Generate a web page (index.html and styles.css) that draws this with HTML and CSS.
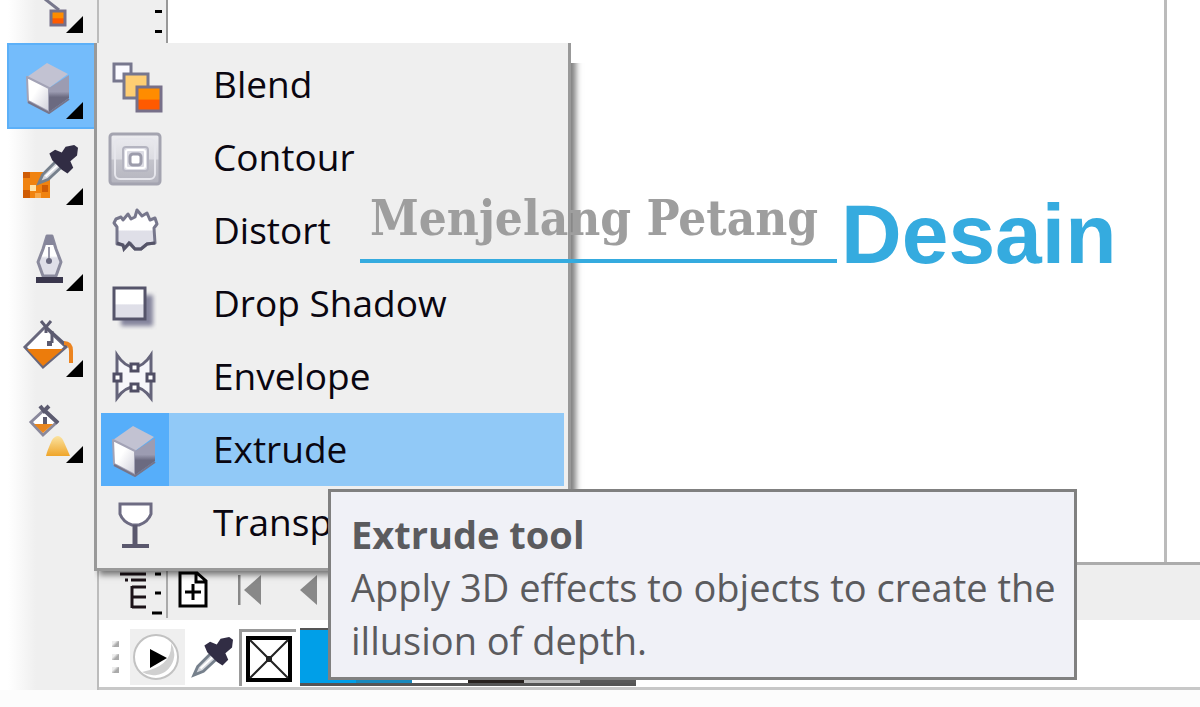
FILE: index.html
```html
<!DOCTYPE html>
<html lang="id">
  <head>
    <meta charset="UTF-8" />
    <meta name="viewport" content="width=device-width, initial-scale=1.0" />
    <title>Extrude tool</title>
    <link rel="stylesheet" href="styles.css">
  </head>

  <body>
    <svg class="defs" aria-hidden="true">
      <defs>
        <linearGradient id="front" x1="0" y1="0" x2="1" y2="1">
          <stop offset="0.4" stop-color="#fff" />
          <stop offset="1" stop-color="#cfcfda" />
        </linearGradient>
        <linearGradient id="side" x1="0" y1="0" x2="0" y2="1">
          <stop offset="0.45" stop-color="#9c9cb2" />
          <stop offset="0.6" stop-color="#6b6a80" />
        </linearGradient>
        <linearGradient id="glass" x1="0" y1="0" x2="0" y2="1">
          <stop offset="0.5" stop-color="#fff" />
          <stop offset="0.55" stop-color="#dfdfe8" />
        </linearGradient>
        <linearGradient id="hot" x1="0" y1="0" x2="0" y2="1">
          <stop offset="0.5" stop-color="#ff8c00" />
          <stop offset="0.55" stop-color="#ff5a00" />
        </linearGradient>
        <linearGradient id="plate" x1="0" y1="0" x2="0" y2="1">
          <stop offset="0" stop-color="#ececf0" />
          <stop offset="0.5" stop-color="#dcdce2" />
          <stop offset="0.52" stop-color="#c4c4cc" />
          <stop offset="1" stop-color="#b4b4be" />
        </linearGradient>
        <linearGradient id="lamp" x1="0" y1="0" x2="0" y2="1">
          <stop offset="0" stop-color="#fbe3a0" />
          <stop offset="1" stop-color="#efa52a" />
        </linearGradient>
        <filter id="soft"><feGaussianBlur stdDeviation="2" /></filter>
      </defs>
      <symbol id="cube" viewBox="0 0 46 52">
        <path d="M22 1 L43 12 L24 26 L2 15 Z" fill="#c2c2d2" />
        <path d="M2 15 L24 26 L24 50 L3 39 Z" fill="url(#front)" stroke="#a3a3b6" stroke-width="2" stroke-linejoin="round" />
        <path d="M24 26 L44 13 L44 36 L24 50 Z" fill="url(#side)" />
        <path d="M3 40 L24 51 L44 37" fill="none" stroke="#77758a" stroke-width="2" />
      </symbol>
      <symbol id="dropper" viewBox="0 0 44 44">
        <path d="M3 41 L7 32 L23 16 L29 22 L13 37 Z" fill="#d5d8de" stroke="#76808c" stroke-width="3" />
        <path d="M10 34 L25 20" stroke="#fff" stroke-width="2" />
        <path d="M14 10 L20 6 L27 9 L31 3 L40 1 L44 4 L43 12 L36 18 L39 25 L33 31 L27 27 L17 17 Z" fill="#312d44" />
      </symbol>
      <symbol id="flyout" viewBox="0 0 18 18">
        <path d="M0 17 L17 0 V17 Z" />
      </symbol>
    </svg>

    <div class="app">
      <nav class="toolbox" aria-label="Toolbox">
        <button class="tool tool-cut" aria-label="Connector">
          <svg viewBox="0 0 86 86">
            <path d="M38 42 L52 53" stroke="#77778c" stroke-width="3" />
            <rect x="44" y="54" width="14" height="14" fill="url(#hot)" stroke="#77708a" stroke-width="3" />
            <use href="#flyout" x="59" y="59" width="18" height="18" />
          </svg>
        </button>
        <button class="tool active" aria-label="Extrude">
          <svg viewBox="0 0 86 86">
            <use href="#cube" x="18" y="19" width="46" height="52" />
            <use href="#flyout" x="59" y="59" width="18" height="18" />
          </svg>
        </button>
        <button class="tool" aria-label="Color eyedropper">
          <svg viewBox="0 0 86 86">
            <rect x="16" y="43" width="27" height="26" fill="#f08310" />
            <path d="M16 43h7v6h-7z M35 56h6v7h-6z M16 61h7v8h-7z" fill="#cf5c05" />
            <path d="M23 56h6v6h-6z" fill="#ffe3a8" />
            <path d="M28 64h6v5h-6z" fill="#f8a94a" />
            <use href="#dropper" x="29" y="15" width="42" height="42" />
            <use href="#flyout" x="59" y="59" width="18" height="18" />
          </svg>
        </button>
        <button class="tool" aria-label="Outline pen">
          <svg viewBox="0 0 86 86">
            <path d="M40 21 H45 L49 34 L54 47 L49 61 H36 L31 47 L36 34 Z" fill="url(#glass)" stroke="#8a8a9d" stroke-width="3" stroke-linejoin="round" />
            <path d="M40 20 H45 L48 30 H37 Z" fill="#85859a" />
            <path d="M42 32 V45" stroke="#9999aa" stroke-width="2" />
            <circle cx="42" cy="46" r="3" fill="#6a6a80" />
            <rect x="29" y="62" width="27" height="6" fill="#3a374d" />
            <use href="#flyout" x="59" y="59" width="18" height="18" />
          </svg>
        </button>
        <button class="tool" aria-label="Fill">
          <svg viewBox="0 0 86 86">
            <path d="M38 26 L59 46 L36 66 L18 46 Z" fill="#fff" stroke="#68677c" stroke-width="3" />
            <path d="M20 48 H56 L36 65 Z" fill="#ec7c0c" />
            <path d="M34 20 L39 26 L44 20 M39 26 V32 M39 26 L60 45" stroke="#5c5b70" stroke-width="3" fill="none" />
            <path d="M45 30 V42" stroke="#5c5b70" stroke-width="3" />
            <rect x="40" y="40" width="5" height="5" fill="#5c5b70" />
            <path d="M57 42 Q64 42 64 50 V62" stroke="#ec8420" stroke-width="4" fill="none" />
            <use href="#flyout" x="59" y="59" width="18" height="18" />
          </svg>
        </button>
        <button class="tool" aria-label="Smart fill">
          <svg viewBox="0 0 86 86">
            <path d="M37 23 L50 35 L36 48 L24 35 Z" fill="#fff" stroke="#8a899c" stroke-width="3" />
            <path d="M27 37 H46 L36 46 Z" fill="#e8861e" />
            <path d="M33 19 L37 24 L42 19 M37 23 L51 36 M38 37 V30" stroke="#5c5b70" stroke-width="4" fill="none" />
            <path d="M39 69 Q40 64 45 53 Q51 45 56 53 Q61 64 63 69 Z" fill="url(#lamp)" />
            <use href="#flyout" x="59" y="59" width="18" height="18" />
          </svg>
        </button>
      </nav>

      <main class="workspace">
        <div class="stage">
          <div class="ruler"><i></i><i></i></div>
          <div class="canvas"></div>
          <div class="rail"></div>
        </div>

        <div class="pages">
          <svg class="ruler-end" width="70" height="54" viewBox="0 0 70 54">
            <path d="M21 8 H47 M26 14 H29 M32 14 H47 M33 21 H47 M33 31 H47 M33 41 H47 M33 20 V42" stroke="#1c1218" stroke-width="3" fill="none" />
            <path d="M56 8 H62 M56 27 H62 M53 47 H63" stroke="#000" stroke-width="3" />
            <path d="M68 4 V52" stroke="#aaa" stroke-width="2" />
          </svg>
          <button class="page-btn" aria-label="Add page">
            <svg width="30" height="44" viewBox="0 0 30 44">
              <path d="M2 5 V38 H28 V13 L19 5 Z M18 5 V14 H28" fill="#fff" stroke="#000" stroke-width="3" />
              <path d="M7 24 H23 M15 16 V32" stroke="#000" stroke-width="3" />
            </svg>
          </button>
          <button class="page-btn" aria-label="First page">
            <svg width="24" height="32" viewBox="0 0 24 32">
              <path d="M1 1 V31" stroke="#888" stroke-width="3" />
              <path d="M23 1 V31 L6 16 Z" fill="#888" />
            </svg>
          </button>
          <button class="page-btn previous" aria-label="Previous page">
            <svg width="18" height="32" viewBox="0 0 18 32">
              <path d="M17 1 V31 L0 16 Z" fill="#888" />
            </svg>
          </button>
        </div>

        <div class="palette">
          <div class="grip"><i></i><i></i><i></i></div>
          <button class="play" aria-label="Palette options">
            <svg width="46" height="46" viewBox="0 0 46 46">
              <circle cx="23" cy="23" r="22" fill="#fff" stroke="#c2c2c2" stroke-width="2" />
              <path d="M9 38 A21 21 0 0 0 38 9 Q40 32 9 38" fill="#d0d0d0" />
              <path d="M17 15 L34 24 L17 34 Z" fill="#000" />
            </svg>
          </button>
          <button class="pick" aria-label="Pick color">
            <svg width="42" height="42"><use href="#dropper" /></svg>
          </button>
          <button class="no-fill" aria-label="No color">
            <svg width="46" height="46" viewBox="0 0 46 46">
              <rect x="2" y="2" width="42" height="42" fill="#fff" stroke="#000" stroke-width="4" />
              <path d="M4 4 L42 42 M42 4 L4 42" stroke="#222" stroke-width="2" />
              <rect x="20" y="20" width="6" height="6" fill="#222" />
            </svg>
          </button>
          <div class="swatches">
            <button class="swatch cyan" aria-label="Cyan"></button>
            <button class="swatch blue" aria-label="Blue"></button>
            <button class="swatch white" aria-label="White"></button>
            <button class="swatch black" aria-label="Black"></button>
            <button class="swatch silver" aria-label="Silver"></button>
            <button class="swatch gray" aria-label="Gray"></button>
          </div>
        </div>
      </main>
    </div>

    <div class="menu" role="menu">
      <button class="item" role="menuitem">
        <svg viewBox="0 0 68 73">
          <rect x="13" y="16" width="17" height="17" fill="#fafaff" stroke="#77778e" stroke-width="3" />
          <rect x="23" y="26" width="24" height="24" fill="#ffce72" stroke="#77778e" stroke-width="3" />
          <rect x="36" y="39" width="24" height="24" fill="url(#hot)" stroke="#77708a" stroke-width="3" />
        </svg>
        <span>Blend</span>
      </button>
      <button class="item" role="menuitem">
        <svg viewBox="0 0 68 73">
          <rect x="9" y="13" width="50" height="50" rx="3" fill="url(#plate)" stroke="#a4a4b0" stroke-width="3" />
          <rect x="14" y="18" width="40" height="40" rx="5" fill="none" stroke="#e6e6ec" stroke-width="2" />
          <rect x="22" y="26" width="25" height="24" rx="3" fill="#dcdce4" stroke="#b4b4c0" stroke-width="2" />
          <rect x="25" y="29" width="19" height="18" rx="2" fill="none" stroke="#fff" stroke-width="2" />
          <rect x="29" y="33" width="11" height="11" rx="3" fill="#fff" stroke="#9c9cab" stroke-width="3" />
        </svg>
        <span>Contour</span>
      </button>
      <button class="item" role="menuitem">
        <svg viewBox="0 0 68 73">
          <path d="M16 33 L13 29 L15 25 L20 23 L22 26 L27 20 L30 25 L34 23 L36 16 L41 22 L46 19 L49 26 L54 24 L56 30 L53 34 L54 49 L46 50 L40 55 L34 55 L29 49 L24 54 L21 51 L16 50 Z" fill="url(#glass)" stroke="#77778c" stroke-width="3" stroke-linejoin="round" />
          <path d="M16 49 L22 51 L23 55 L28 49 L34 55 L40 55 L46 50 L54 49" fill="none" stroke="#555468" stroke-width="3" />
        </svg>
        <span>Distort</span>
      </button>
      <button class="item" role="menuitem">
        <svg viewBox="0 0 68 73">
          <rect x="20" y="28" width="32" height="31" fill="#84849c" filter="url(#soft)" />
          <rect x="13" y="21" width="31" height="31" fill="url(#glass)" stroke="#55546a" stroke-width="3" />
        </svg>
        <span>Drop Shadow</span>
      </button>
      <button class="item" role="menuitem">
        <svg viewBox="0 0 68 73">
          <path d="M16 15 Q24 27 33 27 Q42 27 50 15 V58 Q42 47 33 47 Q24 47 16 58 Z" fill="#f6f6fa" stroke="#65647a" stroke-width="3" />
          <path d="M13 34h7v7h-7z M46 34h7v7h-7z M30 24h7v7h-7z M30 44h7v7h-7z" fill="#fff" stroke="#504e65" stroke-width="3" />
        </svg>
        <span>Envelope</span>
      </button>
      <button class="item selected" role="menuitem">
        <svg viewBox="0 0 68 73">
          <use href="#cube" x="10" y="12" width="46" height="52" />
        </svg>
        <span>Extrude</span>
      </button>
      <button class="item" role="menuitem">
        <svg viewBox="0 0 68 73">
          <path d="M19 18 H50 V28 Q47 36 38 39 H31 Q22 36 19 28 Z" fill="#fff" stroke="#6d6b82" stroke-width="3" />
          <path d="M34 39 V60" stroke="#5a586d" stroke-width="5" />
          <path d="M21 60 H48" stroke="#5a586d" stroke-width="4" />
        </svg>
        <span>Transp</span>
      </button>
    </div>

    <div class="watermark">
      <span class="watermark-name">Menjelang Petang</span>
      <span class="watermark-word">Desain</span>
    </div>

    <div class="tooltip" role="tooltip">
      <strong>Extrude tool</strong>
      <p>Apply 3D effects to objects to create the illusion of depth.</p>
    </div>
  </body>
</html>
```
FILE: styles.css
```css
* {
  margin: 0;
  padding: 0;
  box-sizing: border-box;
}
:root {
  --panel: #efefef;
  --line: #acacac;
  --brand: #35abdf;
}
body {
  display: flex;
  flex-direction: column;
  min-height: 100vh;
  padding-bottom: 17px;
  overflow: hidden;
  background-color: #fcfcfc;
  font-family: "Open Sans", "Noto Sans", sans-serif;
}
button {
  border: none;
  background: none;
  font: inherit;
  color: inherit;
}
svg {
  display: block;
  flex-shrink: 0;
}
.defs {
  position: absolute;
  width: 0;
  height: 0;
}
.app {
  display: flex;
  flex: 1;
}

/* toolbox */
.toolbox {
  display: flex;
  flex-direction: column;
  width: 97px;
  padding-left: 7px;
  background: linear-gradient(to right, #fff 8px, var(--panel) 36px);
}
.tool {
  display: flex;
  align-items: flex-end;
  height: 86px;
}
.tool svg {
  width: 86px;
  height: 86px;
}
.tool-cut {
  height: 43px;
  overflow: hidden;
}
.tool.active {
  background-color: #74bcfb;
  border: 2px solid #5cb0f8;
}
.tool.active svg {
  margin: -2px;
}

/* workspace */
.workspace {
  display: flex;
  flex: 1;
  flex-direction: column;
  border-left: 2px solid #bcbcbc;
}
.stage {
  display: flex;
  flex: 1;
  background-color: #fff;
}
.ruler {
  display: flex;
  flex-direction: column;
  align-items: flex-end;
  gap: 17px;
  width: 69px;
  padding: 10px 4px;
  background-color: var(--panel);
  border-right: 2px solid #999;
}
.ruler i {
  width: 7px;
  height: 3px;
  background-color: #000;
}
.canvas {
  flex: 1;
}
.rail {
  width: 36px;
  border-left: 3px solid #bbb;
}
.pages {
  display: flex;
  align-items: center;
  height: 58px;
  background-color: #eee;
  border-top: 3px solid var(--line);
}
.page-btn {
  margin-left: 30px;
  padding-bottom: 6px;
}
.ruler-end + .page-btn {
  margin-left: 9px;
}
.page-btn.previous {
  margin-left: 38px;
}

/* color palette */
.palette {
  display: flex;
  align-items: center;
  height: 70px;
  padding-top: 7px;
  background-color: #fff;
  border-bottom: 3px solid #c8c8c8;
}
.grip {
  display: flex;
  flex-direction: column;
  gap: 7px;
  width: 31px;
  padding-left: 13px;
}
.grip i {
  width: 7px;
  height: 6px;
  background: linear-gradient(135deg, #eee 30%, #aaa 60%);
}
.play {
  padding: 5px 6px 5px 3px;
  background-color: var(--panel);
}
.pick {
  padding: 0 6px;
}
.no-fill {
  padding: 4px;
  border-top: 3px solid #999;
  border-left: 3px solid #999;
}
.swatches {
  display: flex;
  margin-left: 4px;
}
.swatch {
  width: 56px;
  height: 58px;
  border-top: 2px solid #555;
  border-bottom: 3px solid #555;
}
.cyan {
  background-color: #009fe8;
}
.blue {
  background-color: #1889bd;
}
.white {
  background-color: #fff;
}
.black {
  background-color: #28221f;
}
.silver {
  background-color: #bbb;
}
.gray {
  background-color: #595959;
}

/* flyout menu */
.menu {
  position: absolute;
  top: 43px;
  left: 94px;
  width: 477px;
  padding: 5px 4px 9px;
  background-color: var(--panel);
  border: solid #999;
  border-width: 0 3px 3px;
  box-shadow: 5px 4px 6px rgba(0, 0, 0, 0.5);
  clip-path: polygon(0 0, 100% 0, 100% 20px, 110% 20px, 110% 110%, 0 110%);
}
.item {
  display: flex;
  align-items: center;
  width: 100%;
  height: 73px;
  font-size: 37px;
  color: #0a0610;
}
.item svg {
  width: 68px;
  height: 73px;
}
.item span {
  padding: 0 0 2px 44px;
}
.item.selected {
  background-color: #91c9f7;
}
.item.selected svg {
  background-color: #56aefa;
}

/* watermark over the drawing */
.watermark {
  position: absolute;
  top: 186px;
  left: 360px;
  display: flex;
  align-items: flex-start;
  gap: 4px;
  color: var(--brand);
}
.watermark-name {
  width: 477px;
  height: 77px;
  padding: 2px 0 0 10px;
  border-bottom: 4px solid var(--brand);
  font-family: "DejaVu Serif Condensed", "DejaVu Serif", serif;
  font-size: 49px;
  font-weight: bold;
  line-height: 60px;
  color: #9e9e9e;
  white-space: nowrap;
}
.watermark-word {
  font-family: "Liberation Sans", Arial, sans-serif;
  font-size: 84px;
  font-weight: bold;
  line-height: 96px;
}

/* tooltip */
.tooltip {
  position: absolute;
  top: 489px;
  left: 328px;
  width: 749px;
  padding: 16px 12px 10px 20px;
  background-color: #f0f1f7;
  border: 3px solid #808080;
  font-size: 38px;
  line-height: 53px;
  color: #5b5b5e;
}
.tooltip strong {
  display: block;
}
```
